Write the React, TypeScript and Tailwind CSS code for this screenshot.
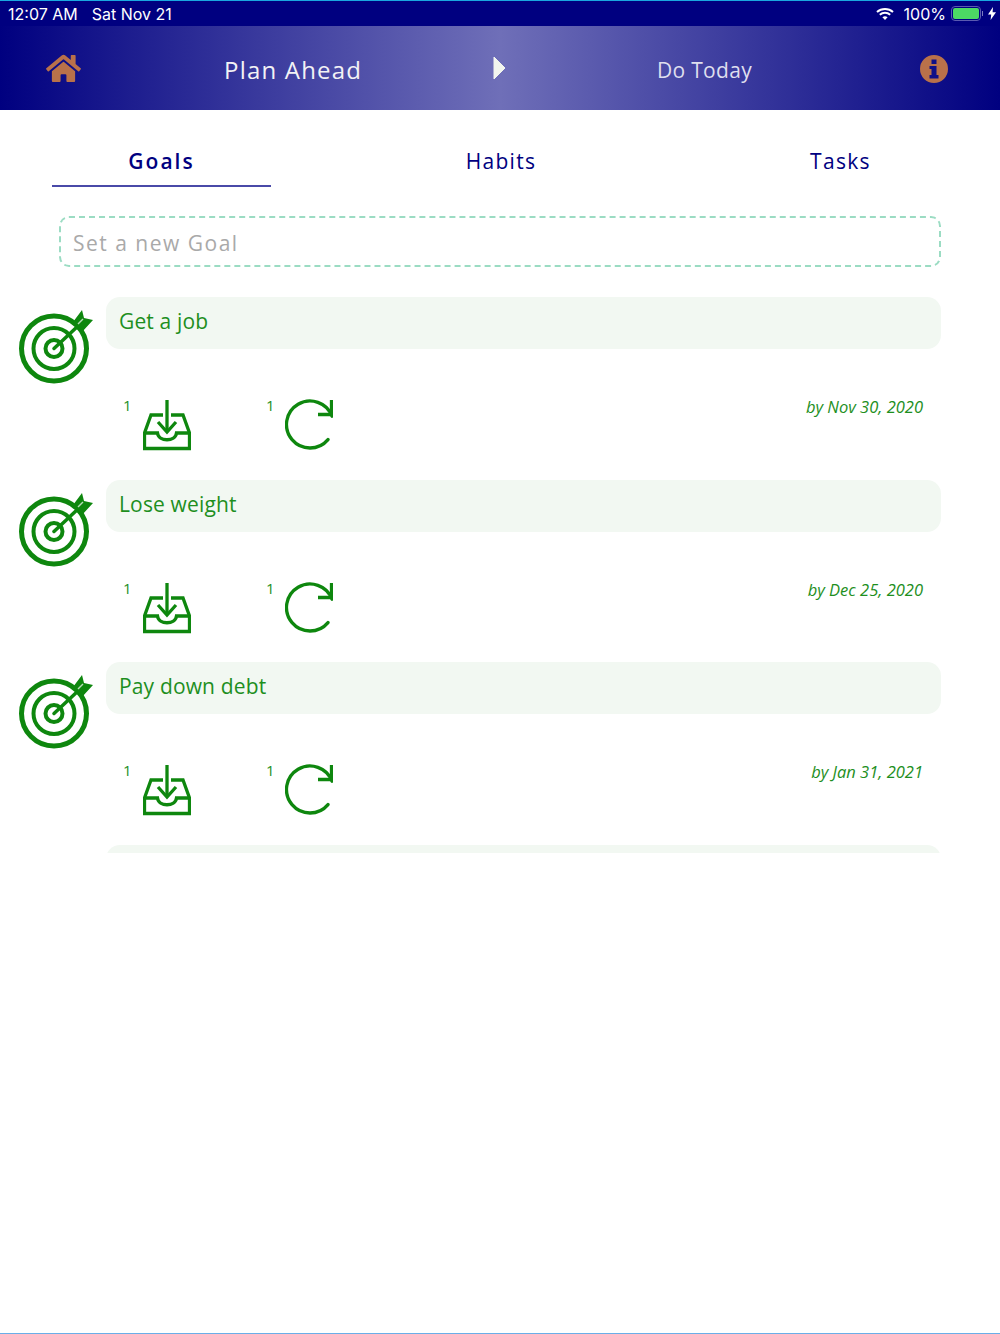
const GREEN = "#0e870e";

const goals = [
  { title: "Get a job", due: "by Nov 30, 2020" },
  { title: "Lose weight", due: "by Dec 25, 2020" },
  { title: "Pay down debt", due: "by Jan 31, 2021" },
];

const HomeIcon = () => (
  <svg viewBox="0 0 576 512" className="h-[31px] w-[35px]" fill="#b9714a">
    <path d="M280.4 148.3L96 300.1V464a16 16 0 0 0 16 16l112.1-.3a16 16 0 0 0 15.9-16V368a16 16 0 0 1 16-16h64a16 16 0 0 1 16 16v95.6a16 16 0 0 0 16 16.1L464 480a16 16 0 0 0 16-16V300L295.7 148.3a12.2 12.2 0 0 0-15.3 0zM571.6 251.5L488 182.6V44.1a12 12 0 0 0-12-12h-56a12 12 0 0 0-12 12v72.6L318.5 43a48 48 0 0 0-61 0L4.3 251.5a12 12 0 0 0-1.6 16.9l25.5 31A12 12 0 0 0 45.2 301l235.2-193.7a12.2 12.2 0 0 1 15.3 0L530.9 301a12 12 0 0 0 16.9-1.6l25.5-31a12 12 0 0 0-1.7-16.9z" />
  </svg>
);

const InfoIcon = () => (
  <svg viewBox="0 0 28 28" className="mt-[2px] h-[28px] w-[28px]">
    <path
      fill="#b9714a"
      fillRule="evenodd"
      d="M14 0A14 14 0 1 1 14 28A14 14 0 1 1 14 0ZM11.5 4.5V9H16.5V4.5ZM9.5 11V14H11.5V20H9.5V23.5H18.5V20H16.5V11Z"
    />
  </svg>
);

const TargetIcon = () => (
  <svg viewBox="0 0 76 76" fill="none" stroke={GREEN} className="h-[76px] w-[76px] shrink-0">
    <circle cx="36" cy="39.5" r="32.5" strokeWidth="5" />
    <circle cx="36" cy="39.5" r="20.5" strokeWidth="4" />
    <circle cx="36" cy="39.5" r="8.5" strokeWidth="4" />
    <path d="M36 39.5L60 17" strokeWidth="3.5" strokeLinecap="round" />
    <path d="M64 1L66 9L75 11L64 23L55 13Z" fill={GREEN} stroke="none" />
    <path d="M60 15L65 10" stroke="#b8dcb8" strokeWidth="1.5" />
  </svg>
);

const InboxIcon = () => (
  <svg viewBox="0 0 48 52" fill="none" stroke={GREEN} strokeWidth="3.3" className="mt-[1px] h-[52px] w-[48px]">
    <path d="M24 1V33" />
    <path d="M15 23L24 33L33 23" />
    <path d="M20 16H8L1.5 34V49.5H46.5V34L40 16H28" />
    <path d="M1.5 34H14.5C15.5 43 32.5 43 33.5 34H46.5" />
  </svg>
);

const RefreshIcon = () => (
  <svg viewBox="0 0 48 52" fill="none" stroke={GREEN} strokeWidth="3.3" className="mt-[1px] h-[52px] w-[48px]">
    <path d="M43 40.6A23.5 23.5 0 1 1 47 17.2" strokeLinecap="round" />
    <path d="M33 15.5H46.5V1" />
  </svg>
);

const WifiIcon = () => (
  <svg viewBox="0 0 18 13" className="h-[13px] w-[18px]" fill="none" stroke="white" strokeWidth="2">
    <path d="M1 5C5.5 1 12.5 1 17 5" />
    <path d="M3.8 7.8C6.8 5.2 11.2 5.2 14.2 7.8" />
    <path d="M9 13L6.4 10.2C8 9 10 9 11.6 10.2Z" fill="white" stroke="none" />
  </svg>
);

const StatusBar = () => (
  <div className="flex h-[26px] items-center justify-between border-t border-[#1aa7e0] bg-[#000080] pl-2 pr-1 font-['Inter',sans-serif] text-[16px] text-white">
    <div className="flex gap-[14px]">
      <span>12:07 AM</span>
      <span>Sat Nov 21</span>
    </div>
    <div className="flex items-center">
      <WifiIcon />
      <span className="ml-[10px]">100%</span>
      <div className="ml-[5px] flex h-[15px] w-[30px] items-center rounded-[4px] border border-[#5a5ab0] p-[1px]">
        <div className="h-full w-full rounded-[2px] bg-[#4cd964]" />
      </div>
      <div className="ml-[1px] h-[5px] w-[1px] bg-[#7a7ac0]" />
      <svg viewBox="0 0 8 13" className="ml-[5px] h-[13px] w-[8px]" fill="white">
        <path d="M5 0L0 7.5H3.2L2.6 13L8 5.2H4.6Z" />
      </svg>
    </div>
  </div>
);

const Header = () => (
  <div className="flex h-[84px] items-center bg-[linear-gradient(90deg,#000080_0%,#6f6fb8_50%,#000080_100%)] font-['Open_Sans',sans-serif]">
    <div className="flex w-[224px] pl-[46px]">
      <HomeIcon />
    </div>
    <span className="w-[269px] pt-[4px] text-[24px] tracking-[1.2px] text-[#f2f2f5]">Plan Ahead</span>
    <svg viewBox="0 0 13 24" className="h-[24px] w-[13px]" fill="#f2f5ee" stroke="#f2f5ee" strokeWidth="1" strokeLinejoin="round">
      <path d="M1 1L12 12L1 23Z" />
    </svg>
    <span className="ml-[151px] w-[263px] pt-[5px] text-[21px] tracking-[0.3px] text-[#dfdfee]">Do Today</span>
    <InfoIcon />
  </div>
);

const Tabs = () => (
  <div className="flex justify-between pl-[52px] pr-[50px] pt-[36px] font-['Open_Sans',sans-serif] text-[21px] tracking-[1.3px] text-[#000080]">
    <div className="flex h-[41px] w-[219px] justify-center border-b-2 border-[#4a4aa8] font-semibold tracking-[2px]">Goals</div>
    <div className="flex h-[41px] w-[219px] justify-center">Habits</div>
    <div className="flex h-[41px] w-[219px] justify-center">Tasks</div>
  </div>
);

const GoalCard = ({ title }: { title: string }) => (
  <div className="h-[52px] rounded-[14px] bg-[#f2f8f2] px-[13px] text-[21px] leading-[48px] tracking-[0.15px] text-[#1e8f1e]">
    {title}
  </div>
);

const GoalRow = ({ title, due }: { title: string; due: string }) => (
  <div className="flex h-[182.5px] shrink-0 pl-[18px] pr-[59px]">
    <div className="w-[88px] pt-[12px]">
      <TargetIcon />
    </div>
    <div className="flex-1">
      <GoalCard title={title} />
      <div className="flex pt-[49px] text-[#1e8f1e]">
        <span className="ml-[17px] -mt-[2px] w-[20px] text-[15px] leading-[18px]">1</span>
        <InboxIcon />
        <span className="ml-[75px] -mt-[2px] w-[19px] text-[15px] leading-[18px]">1</span>
        <RefreshIcon />
        <span className="ml-auto -mt-[1px] pr-[18px] text-[16.5px] leading-[20px] italic">{due}</span>
      </div>
    </div>
  </div>
);

export default function App() {
  return (
    <div className="flex h-[1334px] flex-col border-b border-[#6aaee8] bg-white">
      <StatusBar />
      <Header />
      <Tabs />
      <div className="mx-[59px] mt-[29px] h-[51px] rounded-[10px] border-2 border-dashed border-[#9bdcc3] px-[12px] font-['Open_Sans',sans-serif] text-[21px] leading-[50px] tracking-[1.5px] text-[#a9a9a9]">
        Set a new Goal
      </div>
      <div className="mt-[30px] flex h-[556px] flex-col overflow-hidden font-['Open_Sans',sans-serif]">
        {goals.map((g) => (
          <GoalRow key={g.title} title={g.title} due={g.due} />
        ))}
        <div className="shrink-0 pl-[106px] pr-[59px]">
          <GoalCard title="" />
        </div>
      </div>
    </div>
  );
}
